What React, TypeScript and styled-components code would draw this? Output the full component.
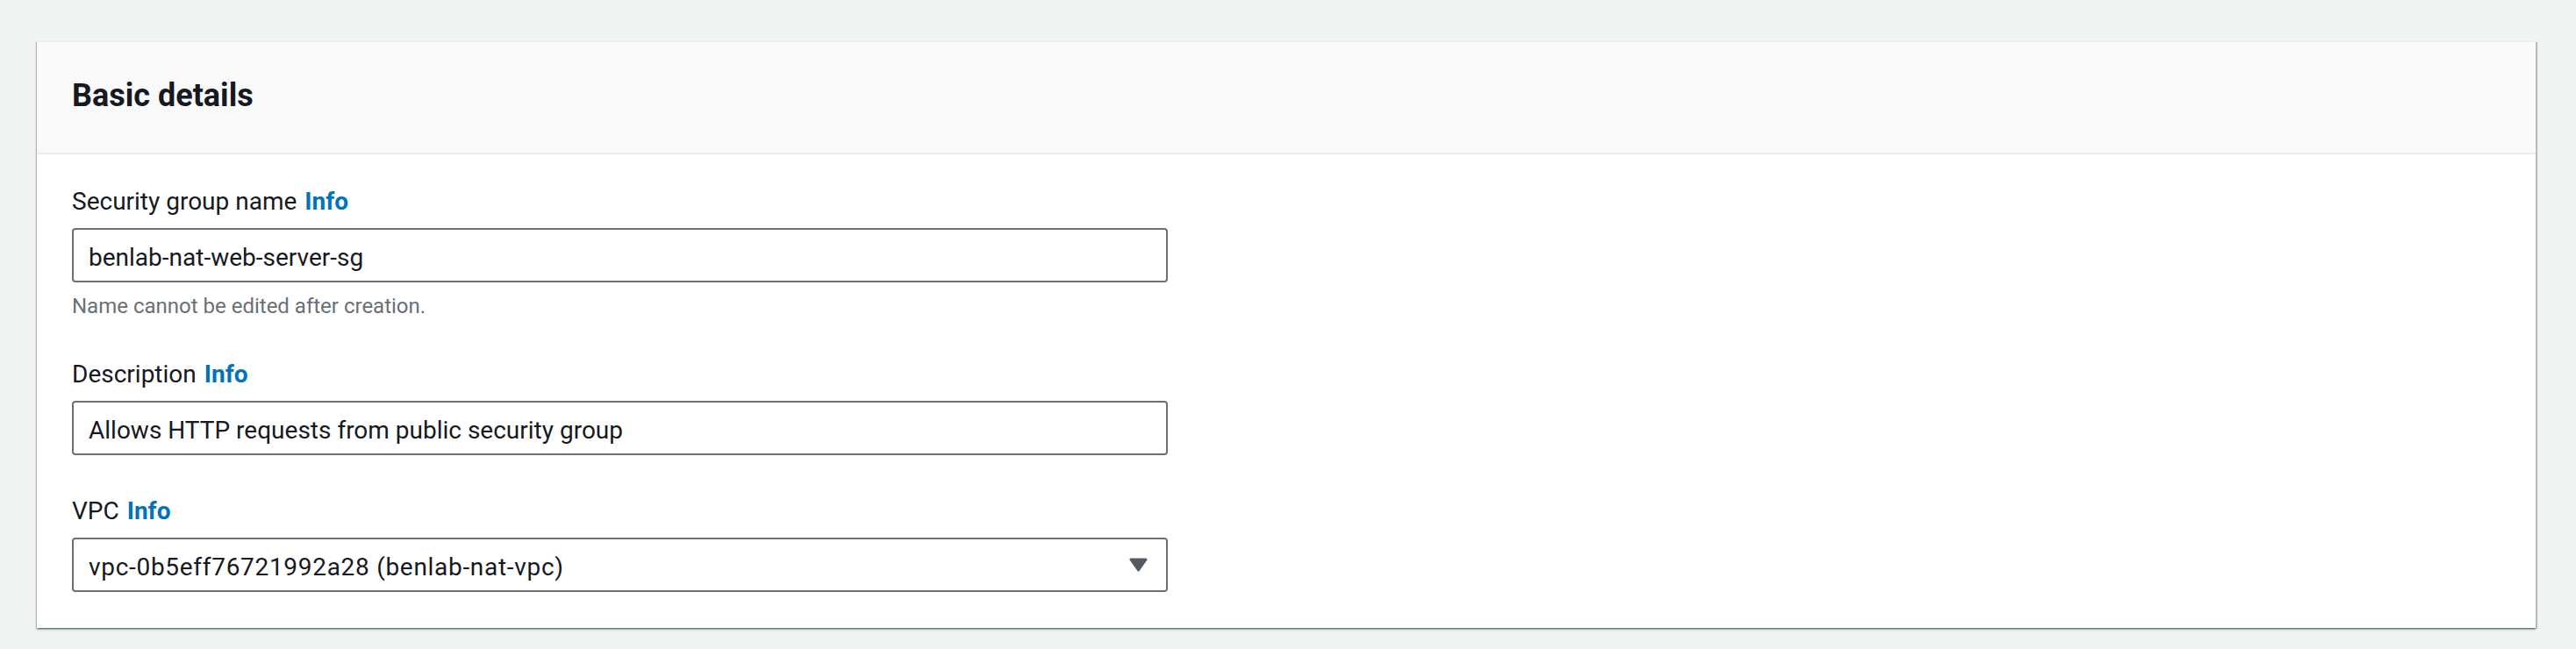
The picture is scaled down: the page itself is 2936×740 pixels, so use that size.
import React from "react";
import styled, { createGlobalStyle } from "styled-components";

const GlobalStyle = createGlobalStyle`
  html, body { margin: 0; padding: 0; background: #f2f3f3; }
  body { font-family: Roboto, "Noto Sans", Arial, sans-serif; color: #16191f; }
  * { box-sizing: border-box; }
`;

const Page = styled.div`
  padding: 47px 46px 22px 42px;
`;

const Card = styled.section`
  background: #ffffff;
  border-top: 1px solid #eaeded;
  box-shadow: 0 2px 2px 0 rgba(0, 28, 36, 0.35), 2px 1px 1px 0 rgba(0, 28, 36, 0.2),
    -1px 1px 1px 0 rgba(0, 28, 36, 0.2);
`;

const Header = styled.header`
  height: 128px;
  background: #fafafa;
  border-bottom: 2px solid #eaeded;
  display: flex;
  align-items: center;
  padding: 0 40px 4px;
`;

const Title = styled.h2`
  margin: 0;
  font-size: 36px;
  line-height: 44px;
  font-weight: 700;
  color: #16191f;
`;

const Body = styled.div`
  padding: 34px 40px 41px;
  display: flex;
  flex-direction: column;
`;

const Field = styled.div<{ $gapTop?: number }>`
  display: flex;
  flex-direction: column;
  margin-top: ${(p) => p.$gapTop ?? 0}px;
`;

const Label = styled.label`
  font-size: 28px;
  line-height: 40px;
  color: #16191f;
  margin-bottom: 10px;
`;

const InfoLink = styled.a`
  color: #0073bb;
  font-weight: 700;
  margin-left: 9px;
  text-decoration: none;
`;

const Box = styled.div<{ $tracking?: number }>`
  position: relative;
  width: 1249px;
  height: 62px;
  border: 2px solid #687078;
  border-radius: 4px;
  background: #ffffff;
  display: flex;
  align-items: center;
  padding: 4px 17px 0;
  font-size: 28px;
  letter-spacing: ${(p) => p.$tracking ?? 0}px;
  color: #16191f;
`;

const Caret = styled.svg`
  position: absolute;
  right: 21px;
  top: 50%;
  margin-top: -8px;
  width: 21px;
  height: 16px;
`;

const Hint = styled.div`
  font-size: 24px;
  line-height: 32px;
  color: #687078;
  margin-top: 11px;
`;

export default function App() {
  return (
    <>
      <GlobalStyle />
      <Page>
        <Card>
          <Header>
            <Title>Basic details</Title>
          </Header>
          <Body>
            <Field>
              <Label>
                Security group name<InfoLink>Info</InfoLink>
              </Label>
              <Box>benlab-nat-web-server-sg</Box>
              <Hint>Name cannot be edited after creation.</Hint>
            </Field>
            <Field $gapTop={42}>
              <Label>
                Description<InfoLink>Info</InfoLink>
              </Label>
              <Box>Allows HTTP requests from public security group</Box>
            </Field>
            <Field $gapTop={44}>
              <Label>
                VPC<InfoLink>Info</InfoLink>
              </Label>
              <Box $tracking={0.7}>
                vpc-0b5eff76721992a28 (benlab-nat-vpc)
                <Caret viewBox="0 0 21 16" aria-hidden="true">
                  <polygon
                    points="2,2 19,2 10.5,14"
                    fill="#545b64"
                    stroke="#545b64"
                    strokeWidth="3"
                    strokeLinejoin="round"
                  />
                </Caret>
              </Box>
            </Field>
          </Body>
        </Card>
      </Page>
    </>
  );
}
